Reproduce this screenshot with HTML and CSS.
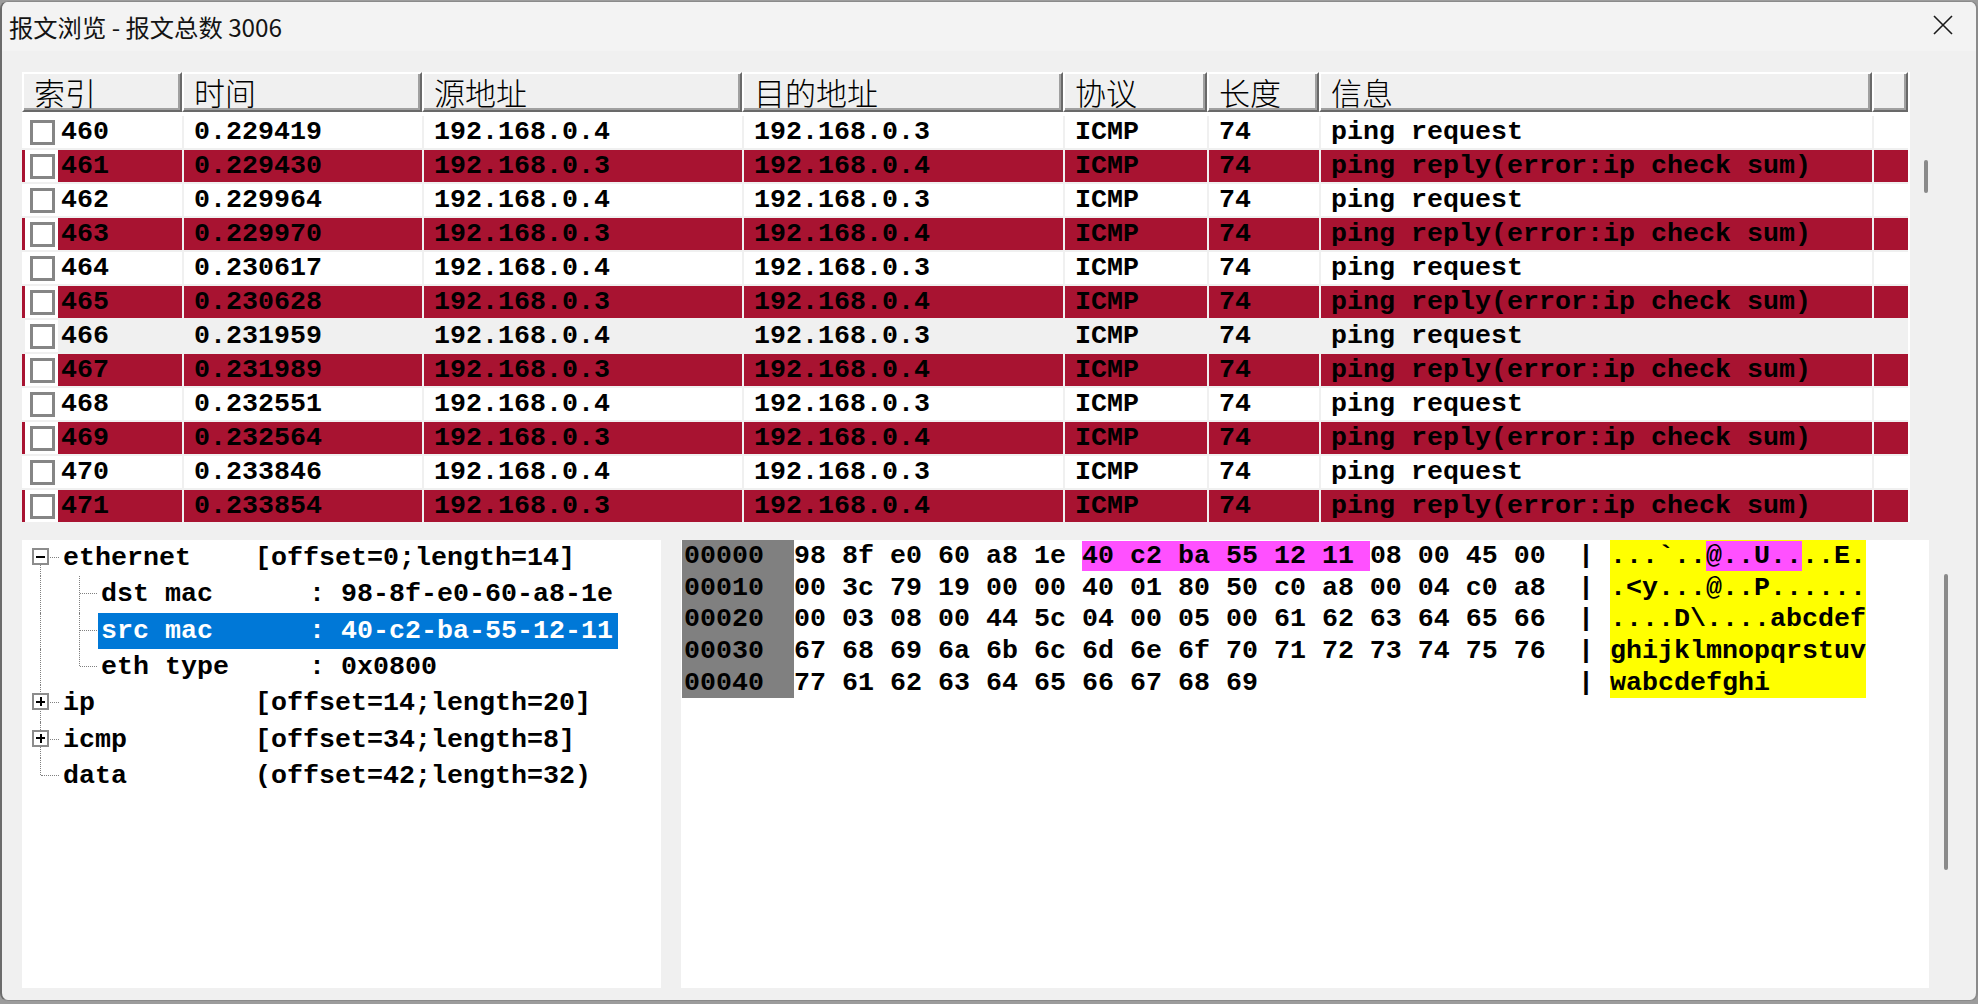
FILE: index.html
```html
<!DOCTYPE html>
<html>
<head>
<meta charset="utf-8">
<link rel="stylesheet" href="styles.css">
</head>
<body>
<div class="window">
  <div class="titlebar">
    <div class="title">报文浏览 - 报文总数 3006</div>
    <svg class="close" width="20" height="20" viewBox="0 0 20 20"><path d="M1 1 L19 19 M19 1 L1 19" stroke="#1a1a1a" stroke-width="1.6" fill="none"/></svg>
  </div>
  <div class="main">
    <div class="top">
      <div class="list">
        <div class="hdr">
          <div class="hcell">索引</div>
          <div class="hcell">时间</div>
          <div class="hcell">源地址</div>
          <div class="hcell">目的地址</div>
          <div class="hcell">协议</div>
          <div class="hcell">长度</div>
          <div class="hcell">信息</div>
          <div class="hcell"></div>
        </div>
        <div class="rows">
          <div class="row"><div class="c c0"><span class="cbw"><span class="cb"></span></span><span class="idx">460</span></div><div class="c">0.229419</div><div class="c">192.168.0.4</div><div class="c">192.168.0.3</div><div class="c">ICMP</div><div class="c">74</div><div class="c">ping request</div><div class="c"></div></div>
          <div class="row err"><div class="c c0"><span class="cbw"><span class="cb"></span></span><span class="idx">461</span></div><div class="c">0.229430</div><div class="c">192.168.0.3</div><div class="c">192.168.0.4</div><div class="c">ICMP</div><div class="c">74</div><div class="c">ping reply(error:ip check sum)</div><div class="c"></div></div>
          <div class="row"><div class="c c0"><span class="cbw"><span class="cb"></span></span><span class="idx">462</span></div><div class="c">0.229964</div><div class="c">192.168.0.4</div><div class="c">192.168.0.3</div><div class="c">ICMP</div><div class="c">74</div><div class="c">ping request</div><div class="c"></div></div>
          <div class="row err"><div class="c c0"><span class="cbw"><span class="cb"></span></span><span class="idx">463</span></div><div class="c">0.229970</div><div class="c">192.168.0.3</div><div class="c">192.168.0.4</div><div class="c">ICMP</div><div class="c">74</div><div class="c">ping reply(error:ip check sum)</div><div class="c"></div></div>
          <div class="row"><div class="c c0"><span class="cbw"><span class="cb"></span></span><span class="idx">464</span></div><div class="c">0.230617</div><div class="c">192.168.0.4</div><div class="c">192.168.0.3</div><div class="c">ICMP</div><div class="c">74</div><div class="c">ping request</div><div class="c"></div></div>
          <div class="row err"><div class="c c0"><span class="cbw"><span class="cb"></span></span><span class="idx">465</span></div><div class="c">0.230628</div><div class="c">192.168.0.3</div><div class="c">192.168.0.4</div><div class="c">ICMP</div><div class="c">74</div><div class="c">ping reply(error:ip check sum)</div><div class="c"></div></div>
          <div class="row hover"><div class="c c0"><span class="cbw"><span class="cb"></span></span><span class="idx">466</span></div><div class="c">0.231959</div><div class="c">192.168.0.4</div><div class="c">192.168.0.3</div><div class="c">ICMP</div><div class="c">74</div><div class="c">ping request</div><div class="c"></div></div>
          <div class="row err"><div class="c c0"><span class="cbw"><span class="cb"></span></span><span class="idx">467</span></div><div class="c">0.231989</div><div class="c">192.168.0.3</div><div class="c">192.168.0.4</div><div class="c">ICMP</div><div class="c">74</div><div class="c">ping reply(error:ip check sum)</div><div class="c"></div></div>
          <div class="row"><div class="c c0"><span class="cbw"><span class="cb"></span></span><span class="idx">468</span></div><div class="c">0.232551</div><div class="c">192.168.0.4</div><div class="c">192.168.0.3</div><div class="c">ICMP</div><div class="c">74</div><div class="c">ping request</div><div class="c"></div></div>
          <div class="row err"><div class="c c0"><span class="cbw"><span class="cb"></span></span><span class="idx">469</span></div><div class="c">0.232564</div><div class="c">192.168.0.3</div><div class="c">192.168.0.4</div><div class="c">ICMP</div><div class="c">74</div><div class="c">ping reply(error:ip check sum)</div><div class="c"></div></div>
          <div class="row"><div class="c c0"><span class="cbw"><span class="cb"></span></span><span class="idx">470</span></div><div class="c">0.233846</div><div class="c">192.168.0.4</div><div class="c">192.168.0.3</div><div class="c">ICMP</div><div class="c">74</div><div class="c">ping request</div><div class="c"></div></div>
          <div class="row err"><div class="c c0"><span class="cbw"><span class="cb"></span></span><span class="idx">471</span></div><div class="c">0.233854</div><div class="c">192.168.0.3</div><div class="c">192.168.0.4</div><div class="c">ICMP</div><div class="c">74</div><div class="c">ping reply(error:ip check sum)</div><div class="c"></div></div>
        </div>
      </div>
      <div class="track1"><div class="thumb1"></div></div>
    </div>

    <div class="bottom">
      <div class="tree">
        <div class="trow">
          <div class="g0"><span class="vl0 from-box"></span><span class="box"><span class="minus"></span></span><span class="hd0"></span></div>
          <span class="ttext">ethernet    [offset=0;length=14]</span>
        </div>
        <div class="trow">
          <div class="g1"><span class="vl0"></span><span class="vl1"></span><span class="hd1"></span></div>
          <span class="ttext">dst mac      : 98-8f-e0-60-a8-1e</span>
        </div>
        <div class="trow">
          <div class="g1"><span class="vl0"></span><span class="vl1"></span><span class="hd1"></span></div>
          <span class="ttext sel">src mac      : 40-c2-ba-55-12-11</span>
        </div>
        <div class="trow">
          <div class="g1"><span class="vl0"></span><span class="vl1 half"></span><span class="hd1"></span></div>
          <span class="ttext">eth type     : 0x0800</span>
        </div>
        <div class="trow">
          <div class="g0"><span class="vl0"></span><span class="box"><span class="minus"></span><span class="plusv"></span></span><span class="hd0"></span></div>
          <span class="ttext">ip          [offset=14;length=20]</span>
        </div>
        <div class="trow">
          <div class="g0"><span class="vl0"></span><span class="box"><span class="minus"></span><span class="plusv"></span></span><span class="hd0"></span></div>
          <span class="ttext">icmp        [offset=34;length=8]</span>
        </div>
        <div class="trow">
          <div class="g0"><span class="vl0 half"></span><span class="hd0 long"></span></div>
          <span class="ttext">data        (offset=42;length=32)</span>
        </div>
      </div>

      <div class="hexpanel">
        <div class="hrow"><span class="addr">00000</span><span class="hex">98 8f e0 60 a8 1e <span class="mg">40 c2 ba 55 12 11 </span>08 00 45 00 </span><span class="sep"> | </span><span class="ascii">...`..<span class="mg">@..U..</span>..E.</span></div>
        <div class="hrow"><span class="addr">00010</span><span class="hex">00 3c 79 19 00 00 40 01 80 50 c0 a8 00 04 c0 a8 </span><span class="sep"> | </span><span class="ascii">.&lt;y...@..P......</span></div>
        <div class="hrow"><span class="addr">00020</span><span class="hex">00 03 08 00 44 5c 04 00 05 00 61 62 63 64 65 66 </span><span class="sep"> | </span><span class="ascii">....D\....abcdef</span></div>
        <div class="hrow"><span class="addr">00030</span><span class="hex">67 68 69 6a 6b 6c 6d 6e 6f 70 71 72 73 74 75 76 </span><span class="sep"> | </span><span class="ascii">ghijklmnopqrstuv</span></div>
        <div class="hrow"><span class="addr">00040</span><span class="hex">77 61 62 63 64 65 66 67 68 69 </span><span class="sep"> | </span><span class="ascii">wabcdefghi</span></div>
      </div>
      <div class="track2"><div class="thumb2"></div></div>
    </div>
  </div>
</div>
</body>
</html>
```

FILE: styles.css
```css
* { box-sizing: border-box; }
html, body { margin: 0; padding: 0; }
body {
  background: #9c9c9c;
  overflow: hidden;
  width: 1978px;
  height: 1004px;
  font-family: "Liberation Mono", "DejaVu Sans Mono", monospace;
}
.window {
  width: 1978px;
  height: 1000px;
  margin-top: 1px;
  background: #f0f0f0;
  border: 1px solid #8a8a8a;
  border-left: 2px solid #6b6b6b;
  border-right: 2px solid #8a8a8a;
  border-radius: 8px;
  overflow: hidden;
  display: flex;
  flex-direction: column;
}
.titlebar {
  height: 49px;
  flex-shrink: 0;
  background: #f3f3f3;
  display: flex;
  justify-content: space-between;
  align-items: flex-start;
}
.title {
  font-family: "Noto Sans CJK SC", sans-serif;
  font-size: 24.3px;
  line-height: 49px;
  padding-left: 7px;
  color: #141414;
}
.close {
  margin-top: 13px;
  margin-right: 23px;
}
.main {
  padding: 21px 0 0 20px;
  display: flex;
  flex-direction: column;
}
.top {
  display: flex;
  height: 450px;
}
.list {
  width: 1888px;
  height: 450px;
  background: #fff;
  border-right: 2px solid #fff;
}
.hdr, .row {
  display: grid;
  grid-template-columns: 160px 240px 320px 321px 144px 112px 553px 36px;
}
.hdr { height: 40px; }
.hcell {
  background: #f0f0f0;
  border-top: 2px solid #fff;
  border-left: 2px solid #fff;
  border-right: 2px solid #696969;
  border-bottom: 2px solid #696969;
  box-shadow: inset -2px -2px 0 #a0a0a0;
  font-family: "Noto Sans CJK SC", sans-serif;
  font-weight: 300;
  font-size: 31px;
  line-height: 36px;
  padding-left: 10px;
  color: #000;
  white-space: nowrap;
}
.rows {
  height: 410px;
  overflow: hidden;
  padding-top: 4px;
}
.row {
  height: 34px;
  border-bottom: 2px solid #f0f0f0;
}
.c {
  font-weight: bold;
  font-size: 26.67px;
  line-height: 32px;
  padding-left: 10px;
  white-space: pre;
  overflow: hidden;
  color: #000;
  border-left: 2px solid #f0f0f0;
}
.c0 {
  border-left: none;
  padding-left: 3px;
  display: flex;
  align-items: stretch;
}
.cbw {
  width: 33px;
  flex-shrink: 0;
  background: #fff;
  display: flex;
  align-items: center;
  padding-left: 5px;
}
.cb {
  flex-shrink: 0;
  width: 25px;
  height: 25px;
  border: 3px solid #858585;
  background: #fff;
}
.idx { margin-left: 3px; }
.row.err .c { background: #a81331; }
.row.hover .c { background: #f0f0f0; }
.track1 {
  width: 4px;
  margin-left: 14px;
}
.thumb1 {
  margin-top: 88px;
  height: 33px;
  width: 4px;
  border-radius: 2px;
  background: #8a8a8a;
}

.bottom {
  display: flex;
  height: 448px;
  margin-top: 18px;
}
.tree {
  width: 639px;
  height: 448px;
  background: #fff;
  overflow: hidden;
}
.trow {
  height: 36.33px;
  display: flex;
  font-weight: bold;
  font-size: 26.67px;
  line-height: 36.33px;
  white-space: pre;
  color: #000;
}
.g0, .g1 {
  position: relative;
  flex-shrink: 0;
  height: 100%;
}
.g0 { width: 41px; }
.g1 { width: 76px; }
.ttext { padding: 0 5px 0 0; }
.g1 + .ttext { padding-left: 3px; }
.sel {
  background: #0078d7;
  color: #fff;
}
.vl0, .vl1 {
  position: absolute;
  top: 0;
  bottom: 0;
  border-left: 1px dotted #808080;
}
.vl0 { left: 18px; }
.vl1 { left: 57px; }
.vl0.from-box { top: 25px; }
.half { bottom: auto; height: 17px; }
.hd0, .hd1 {
  position: absolute;
  top: 17px;
  border-top: 1px dotted #808080;
}
.hd0 { left: 28px; width: 9px; }
.hd0.long { left: 19px; width: 18px; }
.hd1 { left: 58px; width: 17px; }
.box {
  position: absolute;
  left: 10px;
  top: 8px;
  width: 17px;
  height: 17px;
  border: 2px solid #8c8c8c;
  background: #fff;
}
.minus {
  position: absolute;
  left: 2px;
  top: 5.5px;
  width: 9px;
  height: 2px;
  background: #000;
}
.plusv {
  position: absolute;
  left: 5.5px;
  top: 2px;
  width: 2px;
  height: 9px;
  background: #000;
}

.hexpanel {
  width: 1248px;
  height: 448px;
  margin-left: 20px;
  padding-left: 1px;
  background: #fff;
}
.hrow {
  display: flex;
  height: 31.7px;
  font-weight: bold;
  font-size: 26.67px;
  white-space: pre;
  color: #000;
}
.hrow > span {
  display: block;
  height: 31.7px;
  padding-top: 2px;
  line-height: 29.7px;
}
.addr {
  width: 112px;
  background: #808080;
  padding-left: 2px;
}
.hex { width: 768px; }
.sep { width: 48px; }
.ascii {
  width: 256px;
  background: #ffff00;
}
.mg { background: #ff50ff; }
.track2 {
  width: 4px;
  margin-left: 15px;
}
.thumb2 {
  margin-top: 34px;
  height: 296px;
  width: 4px;
  border-radius: 2px;
  background: #8a8a8a;
}
```
